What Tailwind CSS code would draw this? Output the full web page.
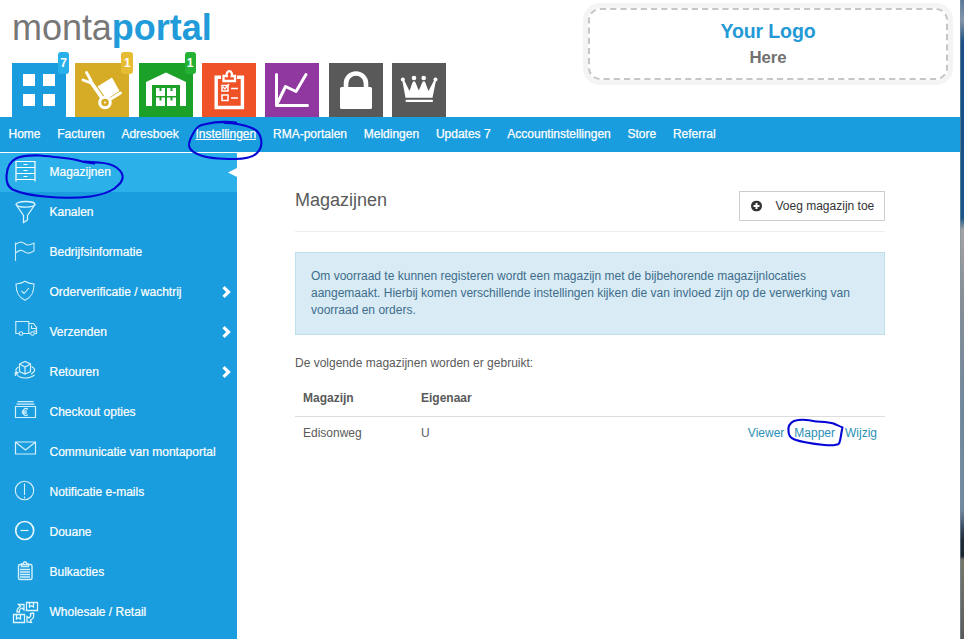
<!DOCTYPE html>
<html lang="nl">
<head>
<meta charset="utf-8">
<title>Montaportal - Magazijnen</title>
<script src="https://cdn.jsdelivr.net/npm/@tailwindcss/browser@4"></script>
</head>
<body class="bg-white">
<div class="relative flex h-[639px] w-[964px] overflow-hidden bg-white font-['Liberation_Sans',Arial,sans-serif] text-[12px] text-[#5a5a5a]">
  <div class="flex w-[960px] flex-col">
    <header class="flex h-[117px] justify-between pl-3 pr-[7px]">
      <div class="flex flex-col justify-between">
        <div class="pt-[7px] text-[36px] leading-[41px] tracking-[-0.04px] text-[#777]">monta<b class="text-[#219bda]">portal</b></div>
        <div class="flex gap-[9.35px]">
          <div class="relative size-[54px] bg-[#199dde]">
            <svg class="size-[54px]" viewBox="0 0 54 54" fill="#fff"><path d="M11 11h12v12H11zM31 11h12v12H31zM11 31h12v12H11zM31 31h12v12H31z"/></svg>
            <span class="absolute -top-[11px] left-[46px] h-[22px] w-[11px] rounded-[3px] bg-[#28b0ea] text-center font-bold leading-[22px] text-white">7</span>
          </div>
          <div class="relative size-[54px] bg-[#d6ac26]">
            <svg class="size-[54px]" viewBox="0 0 54 54" fill="none" stroke="#fff"><path d="M11.500 9.500l4.500 8M8 17l8 3 10.500 15" stroke-width="2.800" stroke-linecap="round" stroke-linejoin="round"/><path d="M15 17l12 17M35 36.500L45.500 30" stroke-width="2.800" stroke-linecap="round"/><path d="M22.500 23.500L37 14.500l7.500 13.500L33 35.500l-3-1.500z" fill="#fff" stroke="none"/><circle cx="30" cy="39.500" r="5.300" stroke-width="3" fill="#d6ac26"/><circle cx="30" cy="39.500" r="1" fill="#fff" stroke="none"/></svg>
            <span class="absolute -top-[11px] left-[46px] h-[22px] w-[12px] rounded-[3px] bg-[#e6bd32] text-center font-bold leading-[22px] text-white">1</span>
          </div>
          <div class="relative size-[54px] bg-[#1ba127]">
            <svg class="size-[54px]" viewBox="0 0 54 54" fill="#fff"><path d="M7 43V19L27 9.500 47 19v24h-6V22H13v21z"/><path d="M17 25h3.500v3h2v-3H26v8h-9zM28 25h3.500v3h2v-3H37v8h-9zM17 34.500h3.500v3h2v-3H26V43h-9zM28 34.500h3.500v3h2v-3H37V43h-9z"/></svg>
            <span class="absolute -top-[11px] left-[46px] h-[22px] w-[11px] rounded-[3px] bg-[#25b234] text-center font-bold leading-[22px] text-white">1</span>
          </div>
          <div class="size-[54px] bg-[#f05228]">
            <svg class="size-[54px]" viewBox="0 0 54 54" fill="none" stroke="#fff"><path d="M19 14.200h-4.800v30.300h26.200V14.200H35" stroke-width="3.400"/><path d="M21.500 18v-5h3.300a2.700 3.500 0 1 1 5 0h3.200v5z" stroke-width="2.300"/><path d="M20 22.500h6v5.500h-6zM20 32h6v5.500h-6zM29 25.500h7M29 35h7" stroke-width="1.500"/><path d="M21 24l2 2 4-5" stroke-width="1.400"/></svg>
          </div>
          <div class="size-[54px] bg-[#9138a0]">
            <svg class="size-[54px]" viewBox="0 0 54 54" fill="none" stroke="#fff" stroke-linecap="round" stroke-linejoin="round"><path d="M11.500 11.500v31h31" stroke-width="3"/><path d="M12.500 40l8-16.500L31 28.500 41 11.500" stroke-width="3"/></svg>
          </div>
          <div class="size-[54px] bg-[#595959]">
            <svg class="size-[54px]" viewBox="0 0 54 54"><rect x="11" y="24" width="32" height="22" rx="1.500" fill="#fff"/><path d="M17 26v-5.500a10 10 0 0 1 20 0V26" fill="none" stroke="#fff" stroke-width="4.600"/></svg>
          </div>
          <div class="size-[54px] bg-[#595959]">
            <svg class="size-[54px]" viewBox="0 0 54 54" fill="#fff"><path d="M13.500 34.800L10.200 17l1.600-.5L17.500 28l3.500-9.500h2L26.800 27.500l4-9h2L36.500 28l6-11.500 1.600.5-3.600 17.800z"/><circle cx="10.800" cy="16.500" r="2"/><circle cx="22" cy="15" r="2.300"/><circle cx="31.700" cy="15" r="2.300"/><circle cx="43.500" cy="16.500" r="2"/><circle cx="22" cy="22.300" r="2.300"/><circle cx="31.700" cy="22.300" r="2.300"/><rect x="13.500" y="36.800" width="27.500" height="2.300" rx="1"/></svg>
          </div>
        </div>
      </div>
      <div class="mt-[3px] h-[82px] w-[370px] rounded-[17px] bg-[#f4f4f4] p-[5px]">
        <div class="relative flex h-[72px] flex-col items-center rounded-[12px] bg-white pt-[11px] font-bold">
          <svg class="absolute inset-0 h-[72px] w-[360px]" fill="none" stroke="#c6c6c6" stroke-width="2"><rect x="1" y="1" width="358" height="70" rx="11" stroke-dasharray="6.200 4"/></svg>
          <div class="text-[19.500px] leading-[24px] tracking-[-0.1px] text-[#2599d6]">Your Logo</div>
          <div class="pt-[4px] text-[16.800px] leading-[21px] tracking-[-0.1px] text-[#717171]">Here</div>
        </div>
      </div>
    </header>
    <nav class="flex h-[35px] shrink-0 gap-[16.760px] bg-[#199dde] pl-[8.500px] leading-[34px] text-white [-webkit-text-stroke:0.25px_white]">
      <span>Home</span><span>Facturen</span><span>Adresboek</span><span class="underline">Instellingen</span><span>RMA-portalen</span><span>Meldingen</span><span>Updates 7</span><span>Accountinstellingen</span><span>Store</span><span>Referral</span>
    </nav>
    <div class="flex grow">
      <aside class="mt-px flex w-[237px] shrink-0 flex-col bg-[#199dde] text-white [-webkit-text-stroke:0.2px_white]">
        <div class="relative flex h-[39px] items-center bg-[#2bb0e9] pb-[2px]">
          <svg class="ml-[13px] mr-[12.500px] h-6 w-6 text-white" viewBox="0 0 24 24" fill="none" stroke="currentColor" stroke-width="1.200"><path d="M3 1.500h19v18H3zM3 7.500h19M3 13.500h19M10.500 4.500h4M10.500 10.500h4M10.500 16.500h4M3 19.500v2M22 19.500v2"/></svg>
          <span>Magazijnen</span>
          <svg class="absolute right-0 top-[15px] h-[9px] w-[9px]" viewBox="0 0 9 9" fill="#fff"><path d="M9 0v9L0 4.500z"/></svg>
        </div>
        <div class="flex h-10 items-center">
          <svg class="ml-[13px] mr-[12.500px] h-6 w-6" viewBox="0 0 24 24" fill="none" stroke="#d9f3ff" stroke-width="1.300"><ellipse cx="12.500" cy="4.300" rx="9.500" ry="2.800"/><path d="M3 4.500l7.500 11v7l4-2.500v-4.500l7.500-11"/></svg>
          <span>Kanalen</span>
        </div>
        <div class="flex h-10 items-center">
          <svg class="ml-[13px] mr-[12.500px] h-6 w-6" viewBox="0 0 24 24" fill="none" stroke="#c9ecfb" stroke-width="1.100"><path d="M2.500 2.500V21M2.500 4.500c3.500-3 6-3.500 9-1s5 1.500 9.500-.5v8c-4.500 2.500-6.500 3-9.500.8-3-2.300-5-1.800-9 1.200"/></svg>
          <span>Bedrijfsinformatie</span>
        </div>
        <div class="flex h-10 items-center">
          <svg class="ml-[13px] mr-[12.500px] h-6 w-6" viewBox="0 0 24 24" fill="none" stroke="#d4f0fc" stroke-width="1.100"><path d="M12 1.300c3 2 5.500 2.500 9 2.700 0 8-2 13-9 16.300C5 17 3 12 3 4c3.500-.2 6-.7 9-2.700zM8.500 11l2.500 2.500L16 8"/></svg>
          <span class="grow">Orderverificatie / wachtrij</span>
          <svg class="mr-[5px] h-[12px] w-[10px]" viewBox="0 0 10 12" fill="none" stroke="#fff" stroke-width="3.200"><path d="M1.500 1.200L6.500 6l-5 4.800"/></svg>
        </div>
        <div class="flex h-10 items-center">
          <svg class="ml-[13px] mr-[12.500px] h-6 w-6 overflow-visible" viewBox="0 0 24 24" fill="none" stroke="#d4f0fc" stroke-width="1.100"><path d="M6 13.500H2.800V1.500h13v12H10M16 3.500h4.500l3 4v6H21.500M17 13.500h-1.500M18.500 5.500v3h5M20.500 11h2.500"/><circle cx="8" cy="13.500" r="1.800"/><circle cx="19.500" cy="13.500" r="1.800"/></svg>
          <span class="grow">Verzenden</span>
          <svg class="mr-[5px] h-[12px] w-[10px]" viewBox="0 0 10 12" fill="none" stroke="#fff" stroke-width="3.200"><path d="M1.500 1.200L6.500 6l-5 4.800"/></svg>
        </div>
        <div class="flex h-10 items-center">
          <svg class="ml-[13px] mr-[12.500px] h-6 w-6" viewBox="0 0 24 24" fill="none" stroke="#d4f0fc" stroke-width="1.200"><path d="M6.500 4L12 1.500 17.500 4v7.500L12 14l-5.500-2.500zM6.500 4L12 7l5.500-3M12 7v7M5.500 7c-3.500 2-3.500 4.500-.5 6.500M18.500 6.500c4 2 4.500 5-.5 7.500M3 13c1 3 5 5 9 5 4 0 7-1 9.500-3M2.300 16v-3.300h3.400"/></svg>
          <span class="grow">Retouren</span>
          <svg class="mr-[5px] h-[12px] w-[10px]" viewBox="0 0 10 12" fill="none" stroke="#fff" stroke-width="3.200"><path d="M1.500 1.200L6.500 6l-5 4.800"/></svg>
        </div>
        <div class="flex h-10 items-center">
          <svg class="ml-[13px] mr-[12.500px] h-6 w-6" viewBox="0 0 24 24" fill="none" stroke="#d4f0fc" stroke-width="1.200"><path d="M2.500 6.500h20v11h-20zM4.500 1.700h16M3.500 4.100h18"/><path d="M15 9.200c-3-1.800-5 .3-5 2.800s2 4.600 5 2.800M8.800 11.200h5M8.800 13h5" stroke-width="1.300"/></svg>
          <span>Checkout opties</span>
        </div>
        <div class="flex h-10 items-center">
          <svg class="ml-[13px] mr-[12.500px] h-6 w-6" viewBox="0 0 24 24" fill="none" stroke="#d4f0fc" stroke-width="1.200"><path d="M2.500 2h20v12h-20zM3 2.500l9.500 7.500L22 2.500"/></svg>
          <span>Communicatie van montaportal</span>
        </div>
        <div class="flex h-10 items-center">
          <svg class="ml-[13px] mr-[12.500px] h-6 w-6" viewBox="0 0 24 24" fill="none" stroke="#d4f0fc" stroke-width="1.100"><circle cx="11.500" cy="10.500" r="9.200"/><path d="M11.500 3.500v11.500M11.500 16.500v2"/></svg>
          <span>Notificatie e-mails</span>
        </div>
        <div class="flex h-10 items-center">
          <svg class="ml-[13px] mr-[12.500px] h-6 w-6" viewBox="0 0 24 24" fill="none" stroke="#e4f6fe" stroke-width="1.700"><circle cx="11.700" cy="10.500" r="9"/><path d="M7.500 10.500h8" stroke-width="1.200"/></svg>
          <span>Douane</span>
        </div>
        <div class="flex h-10 items-center">
          <svg class="ml-[13px] mr-[12.500px] h-6 w-6" viewBox="0 0 24 24" fill="none" stroke="#d4f0fc" stroke-width="1.400"><rect x="5.500" y="4.500" width="13.500" height="15" rx="1.500"/><path d="M8.500 6.500V4H10c.5-3 3.500-3 4 0h1.500v2.500zM7 9.500h10M7 12h10M7 14.500h10M7 17h10"/></svg>
          <span>Bulkacties</span>
        </div>
        <div class="flex h-10 items-center">
          <svg class="ml-[13px] mr-[12.500px] h-6 w-6 overflow-visible" viewBox="0 0 24 24" fill="none" stroke="#e0f5fe" stroke-width="1.300"><path d="M13.500 2.500h11v8h-11zM16.500 2.500v4.500l2-1.300 2 1.300V2.500M.5 14.500h11v8H.5zM3.500 14.500V19l2-1.300L7.500 19v-4.500M4 12C3.500 9 5 8 7.500 6.500L5.500 4.500h5.500v5.500l-2-2C6.500 9 6 10 6.500 12zM20.500 13c1 4-.5 6-3 7l1 2.500-4.500-.5v-5.500l2 1.500c2-1.500 2-3 1.500-4.500z"/></svg>
          <span>Wholesale / Retail</span>
        </div>
      </aside>
      <main class="ml-[58px] w-[590px]">
        <div class="flex h-[80px] items-start justify-between border-b border-[#eee]">
          <h1 class="pt-[37px] text-[18px] leading-[22px]">Magazijnen</h1>
          <button class="mt-[39px] flex h-[30px] w-[146px] items-center border border-[#ccc] pl-[11px] text-[#333]">
            <svg class="mr-[13.500px] size-[11px] -translate-y-[0.5px]" viewBox="0 0 11 11"><circle cx="5.500" cy="5.500" r="5.500" fill="#333"/><path d="M5.500 2.500v6M2.500 5.500h6" stroke="#fff" stroke-width="2"/></svg>
            <span>Voeg magazijn toe</span>
          </button>
        </div>
        <div class="mt-5 h-[83px] border border-[#bfe0ea] bg-[#d9ebf5] px-[15px] pt-[15px] leading-[17.140px] text-[#3d6d8b]">Om voorraad te kunnen registeren wordt een magazijn met de bijbehorende magazijnlocaties<br>aangemaakt. Hierbij komen verschillende instellingen kijken die van invloed zijn op de verwerking van<br>voorraad en orders.</div>
        <p class="pt-[19px] leading-[18px]">De volgende magazijnen worden er gebruikt:</p>
        <table class="mt-[8px] w-full border-collapse text-left">
          <thead><tr class="h-[36px] border-b border-[#ddd]"><th class="w-[126px] pl-2">Magazijn</th><th>Eigenaar</th><th></th></tr></thead>
          <tbody><tr class="h-[33px]"><td class="pl-2">Edisonweg</td><td>U</td><td class="pr-2"><div class="flex justify-end gap-[10px] text-[#2b90b6]"><span>Viewer</span><span>Mapper</span><span>Wijzig</span></div></td></tr></tbody>
        </table>
      </main>
    </div>
  </div>
  <div class="w-1 border-l border-[#7d929d]/60 bg-[linear-gradient(180deg,#59779b_0px,#8496aa_20px,#1c4f83_42px,#145187_110px,#1a5688_218px,#a4a4a4_230px,#878d96_300px,#6f879d_410px,#7288a1_510px,#334559_530px,#202b39_540px,#1c2632_556px,#777669_560px,#686b67_600px,#585b59_639px)]"></div>
  <svg class="pointer-events-none absolute inset-0 h-[639px] w-[964px]" viewBox="0 0 964 639" fill="none" stroke="#0505d6" stroke-width="2.100" stroke-linecap="round" stroke-linejoin="round">
    <path d="M236 122.500C226 121.500 214 122 206 124c-7 1-9 3-12 8-3 5-5.500 10-5 14 1 5 6 7 12 9.500 8 3 22 3.500 34 3.500 12 0 18-1.500 22-6 4-4 5-9 4-14-1-6-4-9-9-11-8-3-18-5-27-5"/>
    <path d="M94 163.500L84 162C75 159 69 158.500 60 157.500c-9-1-14-1.500-20-2-9-.3-18 0-24 3-6 3-9 10-9.500 17-.5 7 1 11 6 14 9 4 21 6 32 7 15 1.500 34 1.500 46 0 11-1.500 18-4 24-8 4-4 7-5 8-10 1-5-2-8-6-11-5-3.500-11-4.500-18-5l-14-1"/>
    <path d="M816 421.500C808 419.500 800 419 794 421c-4 2-6 6-5.500 10 0 4 2 7 6 8.500 8 3 20 4.500 30 5.500 6 .5 13 0 14.500-1.500 2-4 2-11 3.500-16-3-1.500-7-3-9-4-5-1.500-10-1.500-17-2"/>
  </svg>
</div>
</body>
</html>
